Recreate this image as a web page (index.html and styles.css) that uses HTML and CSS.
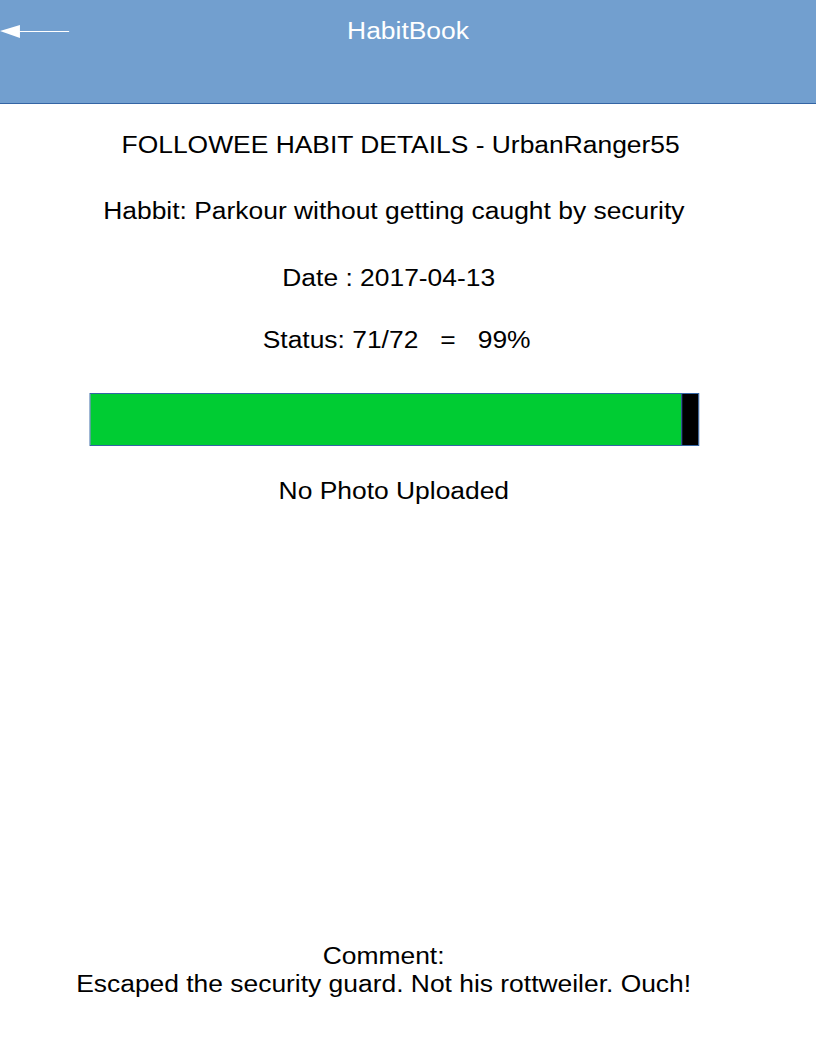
FILE: index.html
```html
<!DOCTYPE html>
<html lang="en">
<head>
<meta charset="utf-8">
<title>HabitBook</title>
<link rel="stylesheet" href="styles.css">
</head>
<body>
<div class="page">
  <header class="appbar">
    <div class="back">
      <svg width="62" height="15" viewBox="0 0 62 15" aria-hidden="true">
        <polygon points="0,7 17.6,1 17.6,14" fill="#ffffff"/>
        <line x1="17" y1="7.5" x2="61" y2="7.5" stroke="#ffffff" stroke-width="1"/>
      </svg>
    </div>
    <div class="app-title">HabitBook</div>
    <div></div>
  </header>
  <main class="content">
    <div class="line heading">FOLLOWEE HABIT DETAILS - UrbanRanger55</div>
    <div class="line habit">Habbit: Parkour without getting caught by security</div>
    <div class="line date">Date : 2017-04-13</div>
    <div class="line status">Status: 71/72   =   99%</div>
    <div class="bar">
      <div class="fill" style="width: 521px"></div>
      <div class="rest"></div>
    </div>
    <div class="line photo">No Photo Uploaded</div>
    <div class="comment">
      <div class="line comment-label">Comment:</div>
      <div class="line comment-text">Escaped the security guard. Not his rottweiler. Ouch!</div>
    </div>
  </main>
</div>
</body>
</html>
```
FILE: styles.css
```css
html, body {
  margin: 0;
  padding: 0;
  background: #ffffff;
  overflow: hidden;
}

body {
  font-family: "Liberation Sans", Arial, sans-serif;
  font-size: 23.3px;
  color: #000000;
}

.page {
  width: 720px;
  transform: scaleX(1.13333);
  transform-origin: 0 0;
}

.appbar {
  box-sizing: border-box;
  height: 104px;
  padding-top: 18px;
  background: #729fcf;
  border-bottom: 1px solid #3465a4;
  display: grid;
  grid-template-columns: 1fr auto 1fr;
  align-items: start;
}

.back svg {
  display: block;
  margin-top: 6px;
}

.app-title {
  color: #ffffff;
  line-height: 26px;
}

.content {
  display: flex;
  flex-direction: column;
  width: 694px;
}

.line {
  line-height: 26px;
  text-align: center;
  white-space: pre;
}

.heading { margin-top: 28px; padding-left: 13px; }
.habit { margin-top: 40px; padding-left: 1px; }
.date { margin-top: 41px; padding-right: 8px; }
.status { margin-top: 36px; padding-left: 6px; }

.bar {
  margin-top: 40px;
  margin-left: 79px;
  width: 538px;
  height: 53px;
  box-sizing: border-box;
  border: 1px solid #3465a4;
  display: flex;
}

.fill {
  background: #00cc33;
  height: 100%;
}

.rest {
  flex: 1;
  background: #000000;
  border-left: 1px solid #3465a4;
}

.photo { margin-top: 32px; padding-left: 1px; }

.comment {
  margin-top: 439px;
  display: flex;
  flex-direction: column;
}

.comment-label, .comment-text { padding-right: 17px; }
.comment-text { margin-top: 2px; }
```
